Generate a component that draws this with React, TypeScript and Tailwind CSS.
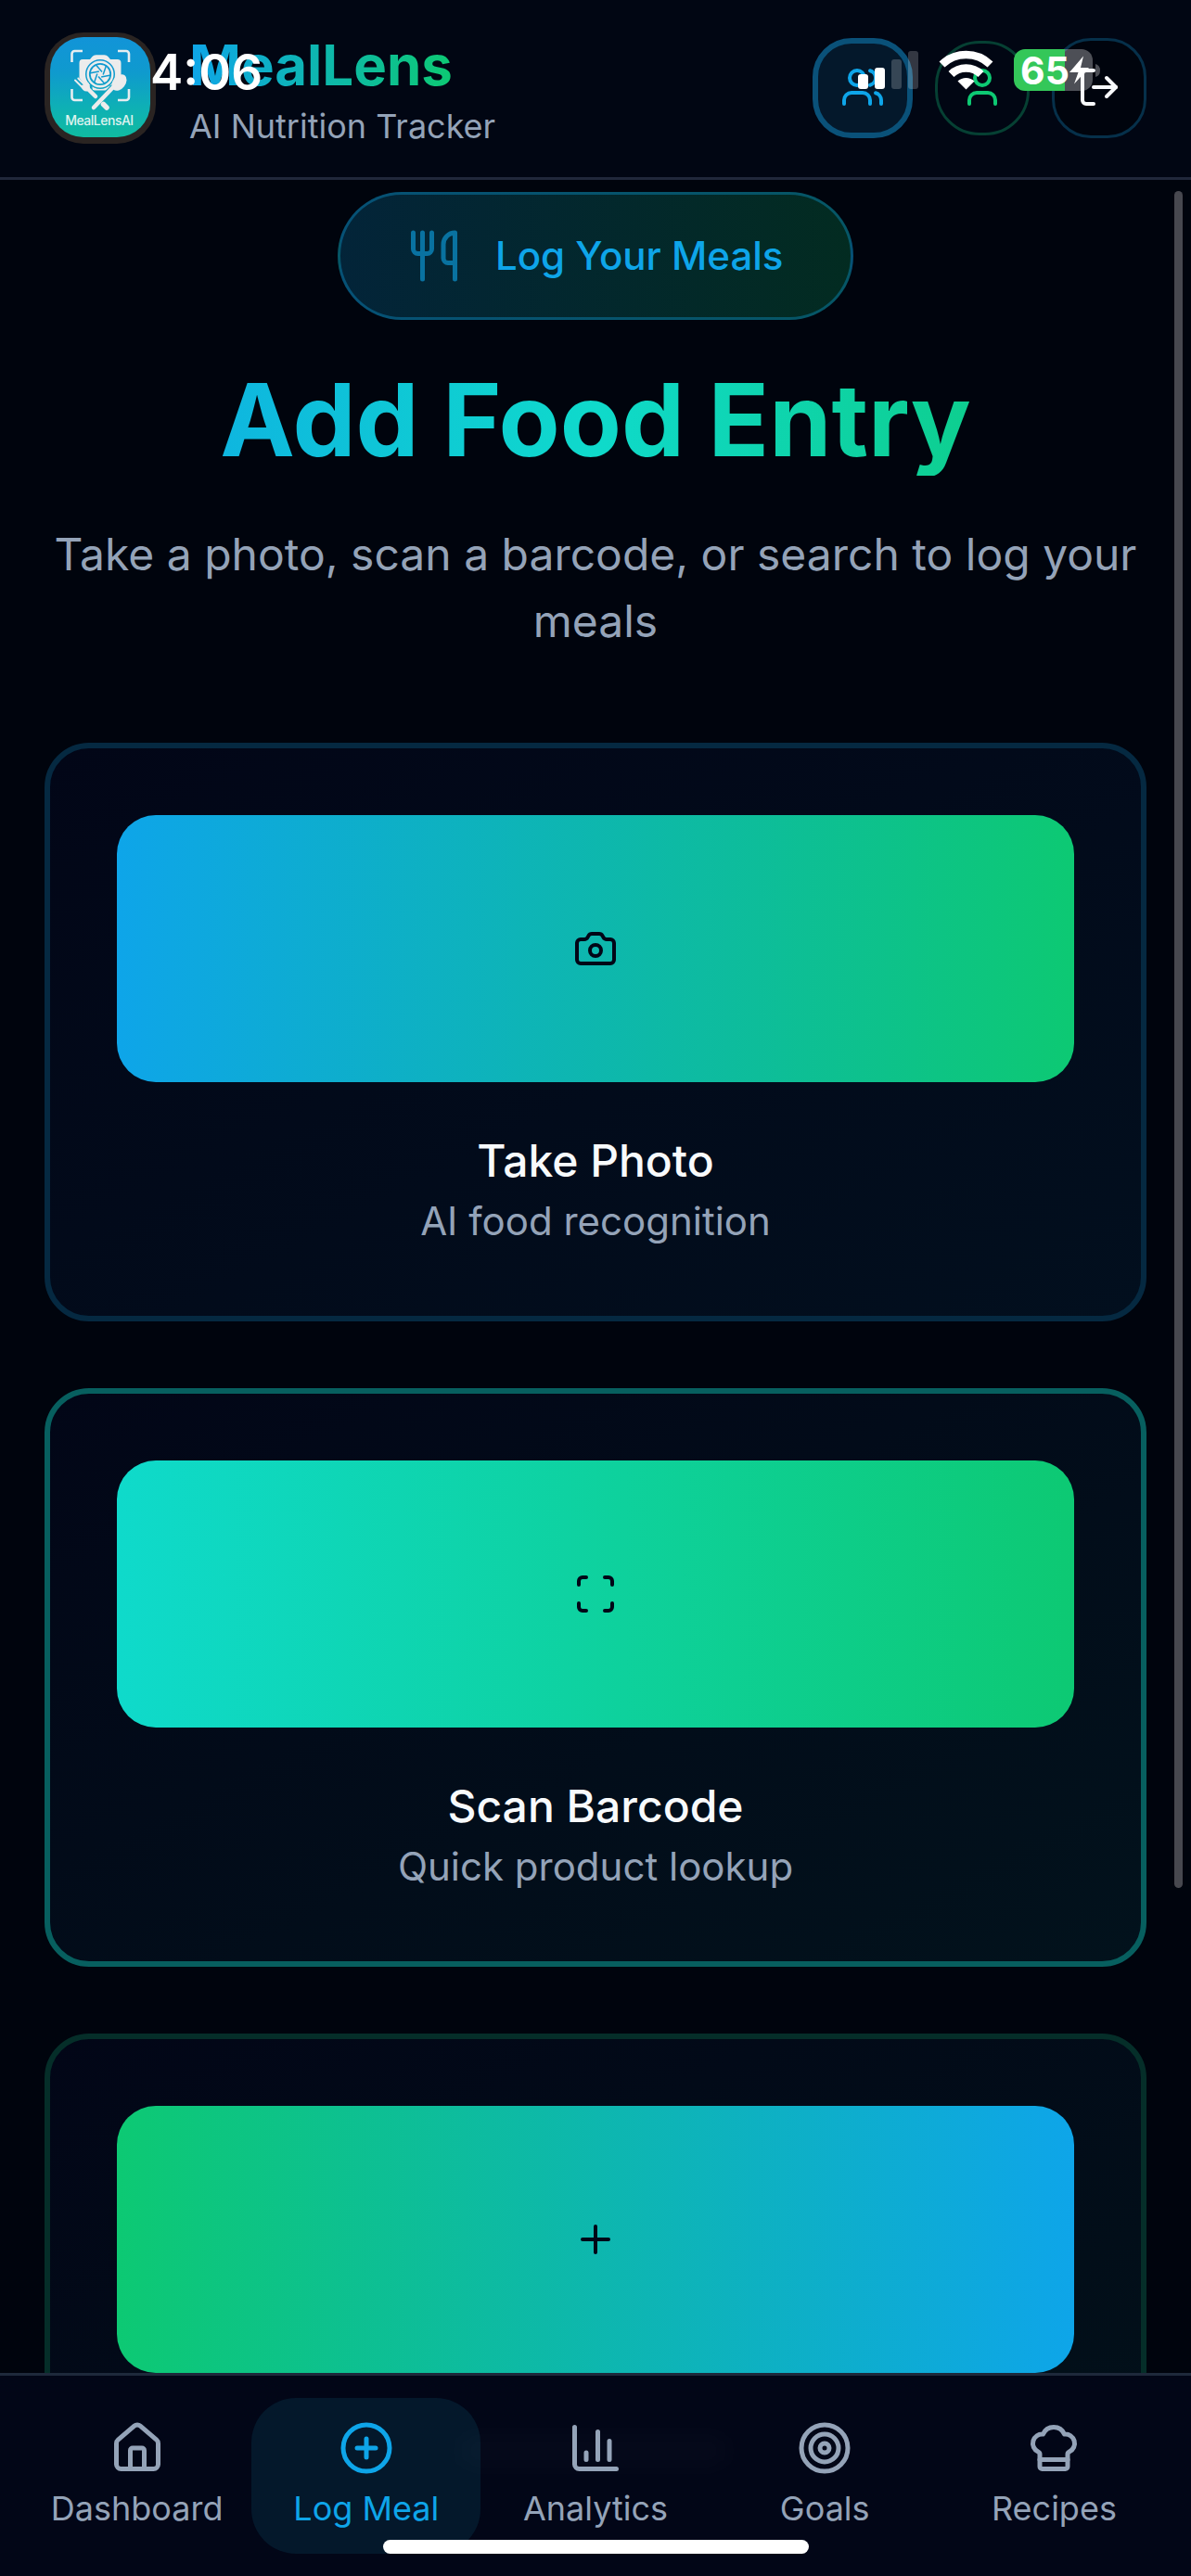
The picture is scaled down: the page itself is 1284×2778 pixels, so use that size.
import React from "react";
import { Users, User, LogOut, Utensils, Camera, Scan, Plus, House, CirclePlus, Target, ChefHat } from "lucide-react";

const blades = [0, 60, 120, 180, 240, 300];

function Logo() {
  return (
    <div className="relative h-[120px] w-[120px] shrink-0 rounded-[42px] bg-[#2a2422] px-[6px] pt-[5px]">
      <svg viewBox="0 0 108 108" className="h-[108px] w-[108px] rounded-[36px]">
        <defs>
          <linearGradient id="logo" gradientUnits="userSpaceOnUse" x1="0" y1="0" x2="0" y2="108">
            <stop offset="0" stopColor="#1294d8" />
            <stop offset="0.35" stopColor="#0f9ace" />
            <stop offset="0.7" stopColor="#0eb0b5" />
            <stop offset="1" stopColor="#10bba0" />
          </linearGradient>
        </defs>
        <rect width="108" height="108" fill="url(#logo)" />
        <g fill="none" stroke="#e6edf0" strokeWidth="2.6">
          <path d="M23.500 27V18a3 3 0 0 1 3-3H35M73 15h9a3 3 0 0 1 3 3v9M85 56v9a3 3 0 0 1-3 3h-9M35 68h-8.500a3 3 0 0 1-3-3v-9" />
        </g>
        <path fill="#ececec" d="M35 24h8l2.500-3q1.500-1.700 4-1.700h9q2.500 0 4 1.700l2.500 3h7.500q4 0 4 4V46L70 52H38L31.500 44V28Q31.500 24 35 24z" />
        <path fill="#ececec" d="M45.500 52h19v3q0 2.500-2.500 2.500H48q-2.500 0-2.500-2.500z" />
        <circle cx="54" cy="40" r="16" fill="url(#logo)" />
        <circle cx="54" cy="40" r="13.300" fill="none" stroke="#ececec" strokeWidth="2.400" />
        <circle cx="54" cy="40" r="10.300" fill="#ececec" />
        <g stroke="url(#logo)" strokeWidth="1.500">
          {blades.map((a) => (
            <path key={a} d="M49 29.500L56 37.500" transform={`rotate(${a} 54 40)`} />
          ))}
        </g>
        <g stroke="url(#logo)" strokeWidth="8" strokeLinecap="round"><path d="M40 57L49 66M68 55L50 73" /></g>
        <g stroke="#ececec" strokeLinecap="round"><path strokeWidth="4.500" d="M39 54l10 10" /><path strokeWidth="5.500" d="M57.500 72.500l3.500 3.500" /></g>
        <path d="M68 54L47 76" stroke="#ececec" strokeWidth="4.500" strokeLinecap="round" />
        <g stroke="#ececec" strokeWidth="1.900" strokeLinecap="round" fill="none"><path d="M27 46.500l8 8M30.300 44.500l8 8M33.800 42.500l7 8" /></g>
        <path fill="#ececec" d="M33 52.500l8-3.500q3 4 1.500 7.500l-2.500 2q-5 .5-7-6z" />
        <ellipse cx="74.500" cy="49" rx="6.800" ry="9.800" transform="rotate(38 74.500 49)" fill="#ececec" />
        <text x="53.200" y="94.700" textAnchor="middle" textLength="74" fontFamily="Inter, sans-serif" fontSize="14" fontWeight="500" fill="#dff3ef">MealLensAI</text>
      </svg>
    </div>
  );
}

function StatusBar() {
  return (
    <div className="pointer-events-none absolute inset-x-0 top-0 z-20 h-[120px] text-white">
      <span className="absolute left-[162px] top-[46px] text-[53px] font-semibold leading-[64px]">4:06</span>
      <svg className="absolute left-[920px] top-[50px] h-[50px] w-[270px]" viewBox="920 50 270 50">
        <rect x="925" y="80" width="11" height="16" rx="3" fill="#fff" />
        <rect x="943" y="73" width="11" height="23" rx="3" fill="#fff" />
        <rect x="961" y="64" width="11" height="32" rx="3" fill="#fff" fillOpacity=".2" />
        <rect x="979" y="55" width="11" height="41" rx="3" fill="#fff" fillOpacity=".2" />
        <g fill="none" stroke="#fff" strokeWidth="8.500">
          <path d="M1015.500 69.500a37.500 37.500 0 0 1 52 0" />
          <path d="M1025.500 80a23 23 0 0 1 32 0" />
        </g>
        <path d="M1041.500 96.500l-9-9a13 13 0 0 1 18 0z" fill="#fff" />
        <path d="M1105 53h43v45h-43a12 12 0 0 1-12-12V65a12 12 0 0 1 12-12z" fill="#34c759" />
        <path d="M1148 53h18a12 12 0 0 1 12 12v21a12 12 0 0 1-12 12h-18z" fill="#fff" fillOpacity=".3" />
        <path d="M1181 69q5 1.500 5 7t-5 7z" fill="#fff" fillOpacity=".3" />
        <path d="M1168 60.500l-15 17.500h9.500l-4.500 12.500 16-17.500h-9z" fill="#fff" />
      </svg>
      <span className="absolute left-[1100px] top-[51px] text-[41px] font-bold leading-[50px]">65</span>
    </div>
  );
}

function Header() {
  return (
    <header className="flex h-[194px] items-start border-b-[3px] border-[#20273a] bg-[#010613] px-12">
      <div className="pt-[35px]"><Logo /></div>
      <div className="ml-9 flex-1 pt-[34px]">
        <h1 className="w-fit bg-linear-to-r/srgb from-[#0ea5e9] to-[#0dc973] bg-clip-text text-[60px] font-bold leading-[72px] text-transparent">MealLens</h1>
        <p className="mt-[6px] text-[36px] leading-[48px] text-[#94a3b8]">AI Nutrition Tracker</p>
      </div>
      <div className="flex items-center gap-6 pt-[41px]">
        <button className="flex h-[108px] w-[108px] items-center justify-center rounded-[42px] border-[6px] border-[#0a5179] bg-[#04182b] pb-[2px] text-[#0ea5e9]"><Users size={48} /></button>
        <button className="flex h-[102px] w-[102px] items-center justify-center rounded-[48px] border-[3px] border-[#064033] pb-[2px] text-[#0dc973]"><User size={48} /></button>
        <button className="flex h-[108px] w-[102px] items-center justify-center rounded-[42px] border-[3px] border-[#06304a] bg-[#00040d] pb-[2px] text-[#f8fafc]"><LogOut size={48} /></button>
      </div>
    </header>
  );
}

function ActionCard({ card, bar, icon, title, sub }: { card: string; bar: string; icon: React.ReactNode; title?: string; sub?: string }) {
  return (
    <section className={"h-[624px] shrink-0 rounded-[48px] border-[6px] p-[72px] text-center " + card}>
      <div className={"flex h-[288px] items-center justify-center rounded-[42px] text-[#020617] " + bar}>{icon}</div>
      <h3 className="mt-[49px] text-[48px] font-medium leading-[72px] text-[#f8fafc]">{title}</h3>
      <p className="-mt-px text-[42px] leading-[60px] text-[#94a3b8]">{sub}</p>
    </section>
  );
}

function ChartIcon() {
  return (
    <svg width="60" height="60" viewBox="0 0 24 24" fill="none" stroke="currentColor" strokeWidth="2" strokeLinecap="round" strokeLinejoin="round">
      <path d="M3 3v16a2 2 0 0 0 2 2h16M18 17V9M13 17V5M8 17v-3" />
    </svg>
  );
}

function NavItem({ icon, label, active }: { icon: React.ReactNode; label: string; active?: boolean }) {
  return (
    <a className={"flex h-[168px] flex-1 flex-col items-center gap-[11px] rounded-[48px] pt-6 " + (active ? "bg-[#04182b] text-[#0ea5e9]" : "text-[#94a3b8]")}>
      {icon}
      <span className="text-[36px] leading-[48px]">{label}</span>
    </a>
  );
}

export default function App() {
  return (
    <div className="relative flex h-[2778px] w-[1284px] flex-col overflow-hidden bg-[#00040d] font-['Inter',sans-serif]">
      <Header />
      <StatusBar />
      <main className="flex h-[2365px] flex-col overflow-hidden px-12 pt-[13px]">
        <div className="flex h-[138px] w-[556px] shrink-0 items-center gap-9 self-center rounded-full border-[3px] border-[#0ea5e9]/35 bg-linear-to-r/srgb from-[#0ea5e9]/20 to-[#0dc973]/20 pl-[71px] text-[#0ea5e9]">
          <Utensils size={60} className="opacity-60" />
          <span className="whitespace-nowrap text-[42px] font-medium leading-[60px]">Log Your Meals</span>
        </div>
        <h2 className="mt-12 h-[120px] shrink-0 bg-linear-to-r/srgb from-[#0ea5e9] via-[#0fdacb] to-[#0dc973] bg-clip-text text-center text-[108px] font-bold leading-[120px] text-transparent">Add Food Entry</h2>
        <p className="mt-[49px] text-center text-[48px] leading-[72px] text-[#94a3b8]">Take a photo, scan a barcode, or search to log your<br />meals</p>
        <div className="mt-[95px] flex flex-col gap-[72px]">
          <ActionCard card="border-[#052941] bg-linear-to-br/srgb from-[#020617] to-[#020f1e]" bar="bg-linear-to-r/srgb from-[#0ea5e9] to-[#0dc973]" icon={<Camera size={48} />} title="Take Photo" sub="AI food recognition" />
          <ActionCard card="border-[#075f5f] bg-linear-to-br/srgb from-[#020617] to-[#02121c]" bar="bg-linear-to-r/srgb from-[#0fdacb] to-[#0dc973]" icon={<Scan size={48} />} title="Scan Barcode" sub="Quick product lookup" />
          <ActionCard card="border-[#052e29] bg-linear-to-br/srgb from-[#020617] to-[#02121a]" bar="bg-linear-to-r/srgb from-[#0dc973] to-[#0ea5e9]" icon={<Plus size={48} />} />
        </div>
      </main>
      <nav className="flex h-[219px] shrink-0 border-t-[3px] border-[#1e293b] bg-[#020617] px-6 pt-6">
        <NavItem icon={<House size={60} />} label="Dashboard" />
        <NavItem icon={<CirclePlus size={60} />} label="Log Meal" active />
        <NavItem icon={<ChartIcon />} label="Analytics" />
        <NavItem icon={<Target size={60} />} label="Goals" />
        <NavItem icon={<ChefHat size={60} />} label="Recipes" />
      </nav>
      <div className="absolute left-[490px] top-[2625px] h-[36px] w-[300px] rounded-full bg-[#f8fafc]/[0.018] blur-[14px]" />
      <div className="absolute left-[413px] top-[2739px] h-[15px] w-[459px] rounded-full bg-white" />
      <div className="absolute left-[1266px] top-[206px] h-[1830px] w-[9px] rounded-full bg-[#47484f]" />
    </div>
  );
}
